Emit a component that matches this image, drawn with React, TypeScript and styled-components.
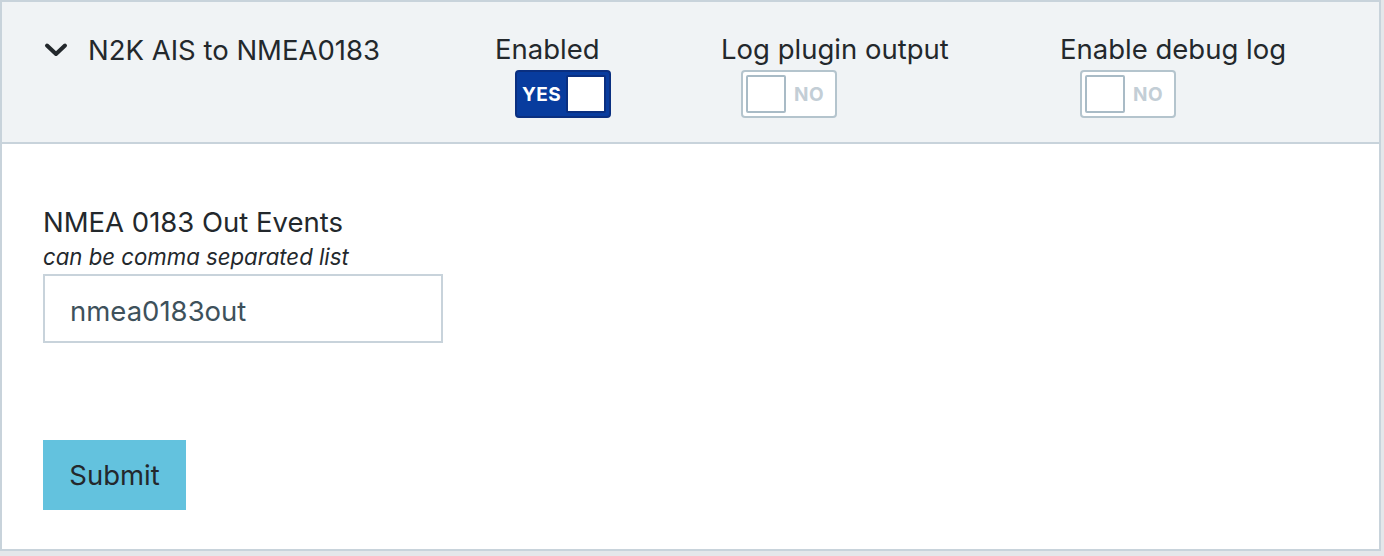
import React from "react";
import styled, { createGlobalStyle } from "styled-components";

const GlobalStyle = createGlobalStyle`
  body {
    margin: 0;
    background: #e4e7ea;
    font-family: Inter, "Noto Sans", "Liberation Sans", sans-serif;
    color: #23282c;
  }
`;

const Card = styled.div`
  width: 1381px;
  height: 551px;
  box-sizing: border-box;
  border: 2px solid #c8d3db;
  background: #fff;
  display: flex;
  flex-direction: column;
`;

const CardHeader = styled.div`
  height: 142px;
  box-sizing: border-box;
  background: #f0f3f5;
  border-bottom: 2px solid #c8d3db;
  padding: 28px 0 0 42px;
  display: grid;
  grid-template-columns: 451px 226px 339px 1fr;
  align-items: start;
`;

const TitleBlock = styled.div`
  display: flex;
  align-items: center;
  gap: 20px;
  font-size: 27.5px;
  line-height: 40px;
`;

const ToggleColumn = styled.div`
  display: flex;
  flex-direction: column;
`;

const ToggleLabel = styled.div`
  font-size: 27.5px;
  line-height: 38px;
`;

const Switch = styled.div<{ $on: boolean }>`
  margin: 2px 0 0 20px;
  width: 96px;
  height: 48px;
  box-sizing: border-box;
  border-radius: 4px;
  border: 2px solid ${(p) => (p.$on ? "#0a2f80" : "#b4c4cd")};
  background: ${(p) => (p.$on ? "#083c9e" : "#fff")};
  display: flex;
  flex-direction: ${(p) => (p.$on ? "row" : "row-reverse")};
  align-items: center;
  justify-content: space-between;
  padding: 0 3px;
`;

const SwitchText = styled.span<{ $on: boolean }>`
  font-size: 19px;
  font-weight: 700;
  letter-spacing: 0.4px;
  color: ${(p) => (p.$on ? "#fff" : "#c3ced6")};
  flex: 1;
  text-align: center;
  margin-right: ${(p) => (p.$on ? "3px" : "0")};
`;

const Knob = styled.span<{ $on: boolean }>`
  width: 40px;
  height: 38px;
  box-sizing: border-box;
  border-radius: 2px;
  background: #fff;
  border: 2px solid ${(p) => (p.$on ? "#0a2f80" : "#a9bbc6")};
`;

const CardBody = styled.div`
  padding: 60px 0 0 41px;
  display: flex;
  flex-direction: column;
  align-items: flex-start;
`;

const FieldLabel = styled.div`
  font-size: 27.5px;
  line-height: 36px;
`;

const Hint = styled.div`
  font-size: 22.2px;
  font-style: italic;
  line-height: 33px;
`;

const TextInput = styled.input`
  margin-top: 1px;
  width: 400px;
  height: 69px;
  box-sizing: border-box;
  border: 2px solid #c8d3db;
  padding: 4px 25px 0;
  font-family: inherit;
  font-size: 27.5px;
  color: #3e515b;
  outline: none;
`;

const SubmitButton = styled.button`
  margin-top: 97px;
  width: 143px;
  height: 70px;
  border: none;
  background: #63c2de;
  color: #23282c;
  font-family: inherit;
  font-size: 27.5px;
  padding: 0;
`;

const Chevron = () => (
  <svg width="24" height="24" viewBox="0 0 24 24">
    <path
      d="M3 7.5 L12 16 L21 7.5"
      fill="none"
      stroke="#23282c"
      strokeWidth="4"
      strokeLinecap="round"
      strokeLinejoin="round"
    />
  </svg>
);

const Toggle = ({ label, on }: { label: string; on: boolean }) => (
  <ToggleColumn>
    <ToggleLabel>{label}</ToggleLabel>
    <Switch $on={on}>
      <SwitchText $on={on}>{on ? "YES" : "NO"}</SwitchText>
      <Knob $on={on} />
    </Switch>
  </ToggleColumn>
);

export default function App() {
  return (
    <>
      <GlobalStyle />
      <Card>
        <CardHeader>
          <TitleBlock>
            <Chevron />
            <span>N2K AIS to NMEA0183</span>
          </TitleBlock>
          <Toggle label="Enabled" on />
          <Toggle label="Log plugin output" on={false} />
          <Toggle label="Enable debug log" on={false} />
        </CardHeader>
        <CardBody>
          <FieldLabel>NMEA 0183 Out Events</FieldLabel>
          <Hint>can be comma separated list</Hint>
          <TextInput defaultValue="nmea0183out" />
          <SubmitButton>Submit</SubmitButton>
        </CardBody>
      </Card>
    </>
  );
}
